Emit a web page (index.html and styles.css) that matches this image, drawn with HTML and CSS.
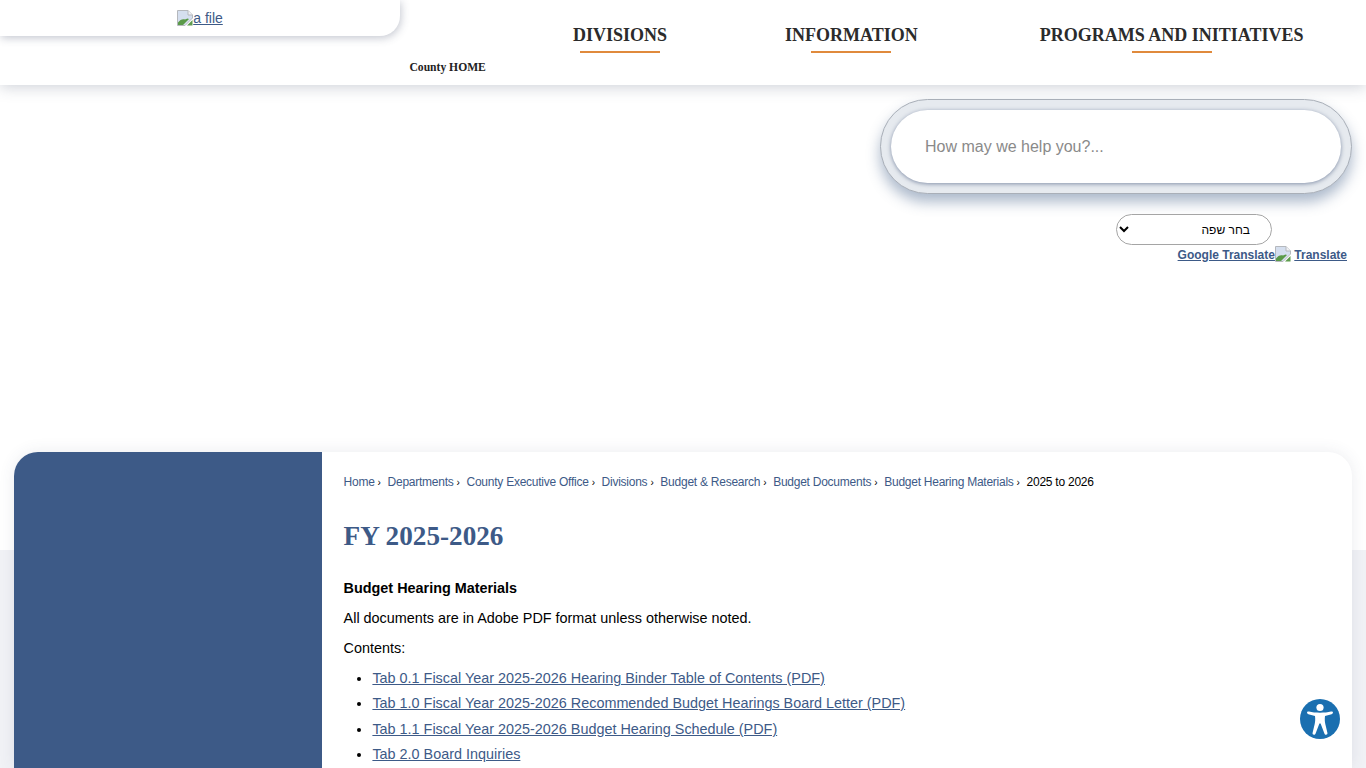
FILE: index.html
```html
<!DOCTYPE html>
<html lang="en">
<head>
  <meta charset="UTF-8">
  <title>FY 2025-2026</title>
  <link rel="stylesheet" href="styles.css">
</head>
<body>
  <svg class="sprite" width="0" height="0">
    <symbol id="broken" viewBox="0 0 16 16">
      <path d="M0.5 0.5H11L15.5 5V8L8 15.5H0.5Z" fill="#d5dfef" stroke="#b5b8bd"/>
      <path d="M11 0.5V5H15.5" fill="#f2f3f5" stroke="#b5b8bd"/>
      <path d="M1 15V12.5C3 9.5 6 8.5 8 9.5L10.5 8.5L12 9L6 15Z" fill="#5a9a48"/>
      <path d="M10 15.5L15.5 10V15.5Z" fill="#5f9c4e"/>
    </symbol>
  </svg>

  <header class="site-header">
    <div class="logo-side">
      <div class="logo-tab">
        <a href="#"><svg class="broken-img"><use href="#broken"/></svg>a file</a>
      </div>
      <a class="county-home" href="#">County HOME</a>
    </div>
    <nav class="main-nav">
      <a href="#" class="nav-divisions">DIVISIONS</a>
      <a href="#" class="nav-information">INFORMATION</a>
      <a href="#" class="nav-programs">PROGRAMS AND INITIATIVES</a>
    </nav>
  </header>

  <section class="tools">
    <div class="search-ring">
      <input class="search-input" type="text" placeholder="How may we help you?...">
    </div>
    <select class="lang-select" dir="rtl">
      <option>בחר שפה</option>
    </select>
    <div class="translate-links">
      <a href="#">Google Translate</a><svg class="broken-img"><use href="#broken"/></svg>
      <a href="#">Translate</a>
    </div>
  </section>

  <main class="page-card">
    <aside class="side-col"></aside>
    <div class="content">
      <div class="breadcrumbs">
        <a href="#">Home</a><span class="sep">›</span>
        <a href="#">Departments</a><span class="sep">›</span>
        <a href="#">County Executive Office</a><span class="sep">›</span>
        <a href="#">Divisions</a><span class="sep">›</span>
        <a href="#">Budget &amp; Research</a><span class="sep">›</span>
        <a href="#">Budget Documents</a><span class="sep">›</span>
        <a href="#">Budget Hearing Materials</a><span class="sep">›</span>
        <span class="current">2025 to 2026</span>
      </div>
      <h1>FY 2025-2026</h1>
      <p><strong>Budget Hearing Materials</strong></p>
      <p>All documents are in Adobe PDF format unless otherwise noted.</p>
      <p>Contents:</p>
      <ul>
        <li><a href="#">Tab 0.1 Fiscal Year 2025-2026 Hearing Binder Table of Contents (PDF)</a></li>
        <li><a href="#">Tab 1.0 Fiscal Year 2025-2026 Recommended Budget Hearings Board Letter (PDF)</a></li>
        <li><a href="#">Tab 1.1 Fiscal Year 2025-2026 Budget Hearing Schedule (PDF)</a></li>
        <li><a href="#">Tab 2.0 Board Inquiries</a></li>
      </ul>
    </div>
  </main>

  <a class="access-btn" href="#" aria-label="Accessibility">
    <svg viewBox="0 0 40 40" width="40" height="40">
      <circle cx="20" cy="20" r="20" fill="#1a6fb0"/>
      <circle cx="20" cy="8.5" r="3.6" fill="#fff"/>
      <path d="M7 13.6C7 12.7 8 12.3 9 12.6C15 14.2 25 14.2 31 12.6C32 12.3 33 12.7 33 13.6C33 14.4 32.5 14.9 31.6 15.2L25 17C24.6 20 24.8 23 25.3 25L27.4 33.8C27.7 35 27 35.8 26 35.8C25.2 35.8 24.7 35.3 24.4 34.5L20.6 24.6H19.4L15.6 34.5C15.3 35.3 14.8 35.8 14 35.8C13 35.8 12.3 35 12.6 33.8L14.7 25C15.2 23 15.4 20 15 17L8.4 15.2C7.5 14.9 7 14.4 7 13.6Z" fill="#fff"/>
    </svg>
  </a>
</body>
</html>
```

FILE: styles.css
```css
html, body {
  margin: 0;
  height: 768px;
  overflow: hidden;
}

body {
  font-family: "Liberation Sans", Arial, sans-serif;
  color: #000;
  background: linear-gradient(#fff 550px, #f1f2f6 550px);
}

a {
  color: #3d5a87;
}

.sprite {
  display: block;
}

.broken-img {
  width: 16px;
  height: 16px;
  vertical-align: -3px;
}

/* header */
.site-header {
  display: flex;
  height: 85px;
  background: #fff;
  box-shadow: 0 2px 14px rgba(60, 70, 100, 0.25);
}

.logo-side {
  width: 490px;
  flex: none;
}

.logo-tab {
  width: 400px;
  height: 36px;
  box-sizing: border-box;
  padding-top: 10px;
  font-size: 14px;
  line-height: 16px;
  text-align: center;
  border-bottom-right-radius: 20px;
  box-shadow: 1px 2px 8px rgba(60, 70, 100, 0.3);
}

.county-home {
  display: block;
  margin: 24px 0 0 409.5px;
  font-family: "Liberation Serif", serif;
  font-size: 11.6px;
  line-height: 16px;
  font-weight: bold;
  color: #222;
  text-decoration: none;
  white-space: nowrap;
}

.main-nav {
  display: flex;
  padding-top: 24px;
}

.main-nav a {
  display: block;
  height: 29px;
  font-family: "Liberation Serif", serif;
  font-size: 18px;
  line-height: 22px;
  font-weight: bold;
  color: #2b2b2b;
  text-decoration: none;
  white-space: nowrap;
  background: linear-gradient(#e08a3c, #e08a3c) center bottom / 80px 2px no-repeat;
}

.nav-divisions {
  margin-left: 83px;
}

.nav-information {
  margin-left: 118px;
}

.nav-programs {
  margin-left: 122px;
}

/* search and translate */
.tools {
  display: flex;
  flex-direction: column;
  align-items: flex-end;
  height: 367px;
  box-sizing: border-box;
  padding: 14px 14px 0 0;
}

.search-ring {
  width: 472px;
  height: 95px;
  box-sizing: border-box;
  padding: 10px;
  border: 1px solid #a9afb8;
  border-radius: 48px;
  background: #e6eaef;
  box-shadow: 0 8px 14px rgba(70, 100, 140, 0.45);
}

.search-input {
  display: block;
  width: 100%;
  height: 73px;
  box-sizing: border-box;
  padding: 0 34px;
  border: 0;
  border-radius: 37px;
  background: #fff;
  font: 16px "Liberation Sans", Arial, sans-serif;
  box-shadow: 0 1px 4px rgba(50, 70, 110, 0.55);
}

.search-input::placeholder {
  color: #8a8a8a;
  opacity: 1;
}

.lang-select {
  width: 156px;
  height: 31px;
  margin: 20px 80px 0 0;
  padding: 0 17px 0 0;
  border: 1px solid #a5a5a5;
  border-radius: 16px;
  background: #fff;
  color: #000;
  font: 12px "Liberation Sans", Arial, sans-serif;
}

.translate-links {
  margin: 1px 5px 0 0;
  font-size: 12px;
  line-height: 16px;
  font-weight: bold;
  white-space: nowrap;
}

/* main card */
.page-card {
  display: flex;
  height: 316px;
  margin: 0 14px;
  border-radius: 24px 24px 0 0;
  background: #fff;
  box-shadow: 0 0 16px rgba(60, 70, 100, 0.1);
  overflow: hidden;
}

.side-col {
  width: 308px;
  flex: none;
  background: #3d5a87;
}

.content {
  flex: 1;
  padding: 22px 21.6px 0;
  font-size: 14.4px;
  line-height: 20px;
}

.breadcrumbs {
  font-size: 12px;
  line-height: 16px;
  letter-spacing: -0.25px;
  white-space: nowrap;
}

.breadcrumbs a {
  text-decoration: none;
}

.sep {
  margin: 0 3.8px 0 3px;
  font-size: 10px;
}

.current {
  color: #000;
}

.content h1 {
  margin: 27px 0 24px;
  font-family: "Liberation Serif", serif;
  font-size: 27.2px;
  line-height: 36px;
  color: #3d5a87;
}

.content p {
  margin: 0 0 10px;
}

.content ul {
  margin: 0;
  padding-left: 28.8px;
}

.content li {
  margin-bottom: 5.4px;
}

.access-btn {
  position: fixed;
  left: 1300px;
  top: 699px;
  width: 40px;
  height: 40px;
}
```
